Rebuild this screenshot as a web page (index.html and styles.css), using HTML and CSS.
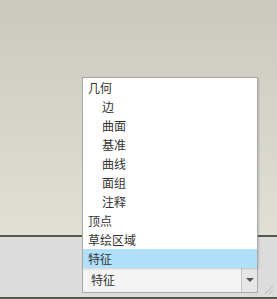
FILE: index.html
```html
<!DOCTYPE html>
<html lang="zh-CN">
<head>
    <meta charset="UTF-8">
    <title>选择过滤器</title>
    <link rel="stylesheet" href="styles.css">
</head>
<body>
    <div class="window">
        <div class="canvas"></div>
        <div class="status-bar">
            <div class="combo">
                <span class="combo-value">特征</span>
                <span class="combo-btn"><span class="arrow"></span></span>
            </div>
            <svg class="grip" width="12" height="12" viewBox="0 0 12 12">
                <path d="M11 3 L3 11 M11 7 L7 11" stroke="#b8b8b8" stroke-width="1"/>
            </svg>
        </div>

        <ul class="dropdown">
            <li>几何</li>
            <li class="sub">边</li>
            <li class="sub">曲面</li>
            <li class="sub">基准</li>
            <li class="sub">曲线</li>
            <li class="sub">面组</li>
            <li class="sub">注释</li>
            <li>顶点</li>
            <li>草绘区域</li>
            <li class="selected">特征</li>
        </ul>
    </div>
</body>
</html>
```

FILE: styles.css
```css
body {
    margin: 0;
    font-family: "Noto Sans CJK SC", "Liberation Sans", sans-serif;
    font-size: 12px;
    color: #333;
}

.window {
    position: relative;
    width: 277px;
    height: 299px;
    overflow: hidden;
}

.canvas {
    height: 235px;
    background: linear-gradient(#cbc9bd, #e1e0d4);
    border-bottom: 2px solid #55584f;
}

.status-bar {
    display: flex;
    align-items: flex-end;
    height: 60px;
    background-color: #dcdcdc;
    border-bottom: 2px solid #55584f;
}

.combo {
    display: flex;
    width: 174px;
    height: 24px;
    margin: 0 0 4px 82px;
    background-color: #f4f4f4;
    border: 1px solid #a9a9a9;
}

.combo-value {
    flex: 1;
    padding-left: 8px;
    line-height: 24px;
}

.combo-btn {
    display: flex;
    justify-content: center;
    align-items: center;
    width: 15px;
    background-color: #e6e6e6;
    border-left: 1px solid #c4c4c4;
}

.arrow {
    width: 0;
    height: 0;
    border-left: 4px solid transparent;
    border-right: 4px solid transparent;
    border-top: 4px solid #555;
}

.grip {
    margin: 0 0 2px 4px;
}

.dropdown {
    position: absolute;
    left: 82px;
    top: 77px;
    width: 174px;
    margin: 0;
    padding: 0;
    list-style: none;
    background-color: #fff;
    border: 1px solid #a8a8a2;
    border-bottom: none;
    box-shadow: 1px 1px 2px rgba(0, 0, 0, 0.15);
}

.dropdown li {
    height: 19px;
    line-height: 19px;
    padding-left: 5px;
}

.dropdown li.sub {
    padding-left: 19px;
}

.dropdown li.selected {
    background-color: #b1e0fb;
}
```
